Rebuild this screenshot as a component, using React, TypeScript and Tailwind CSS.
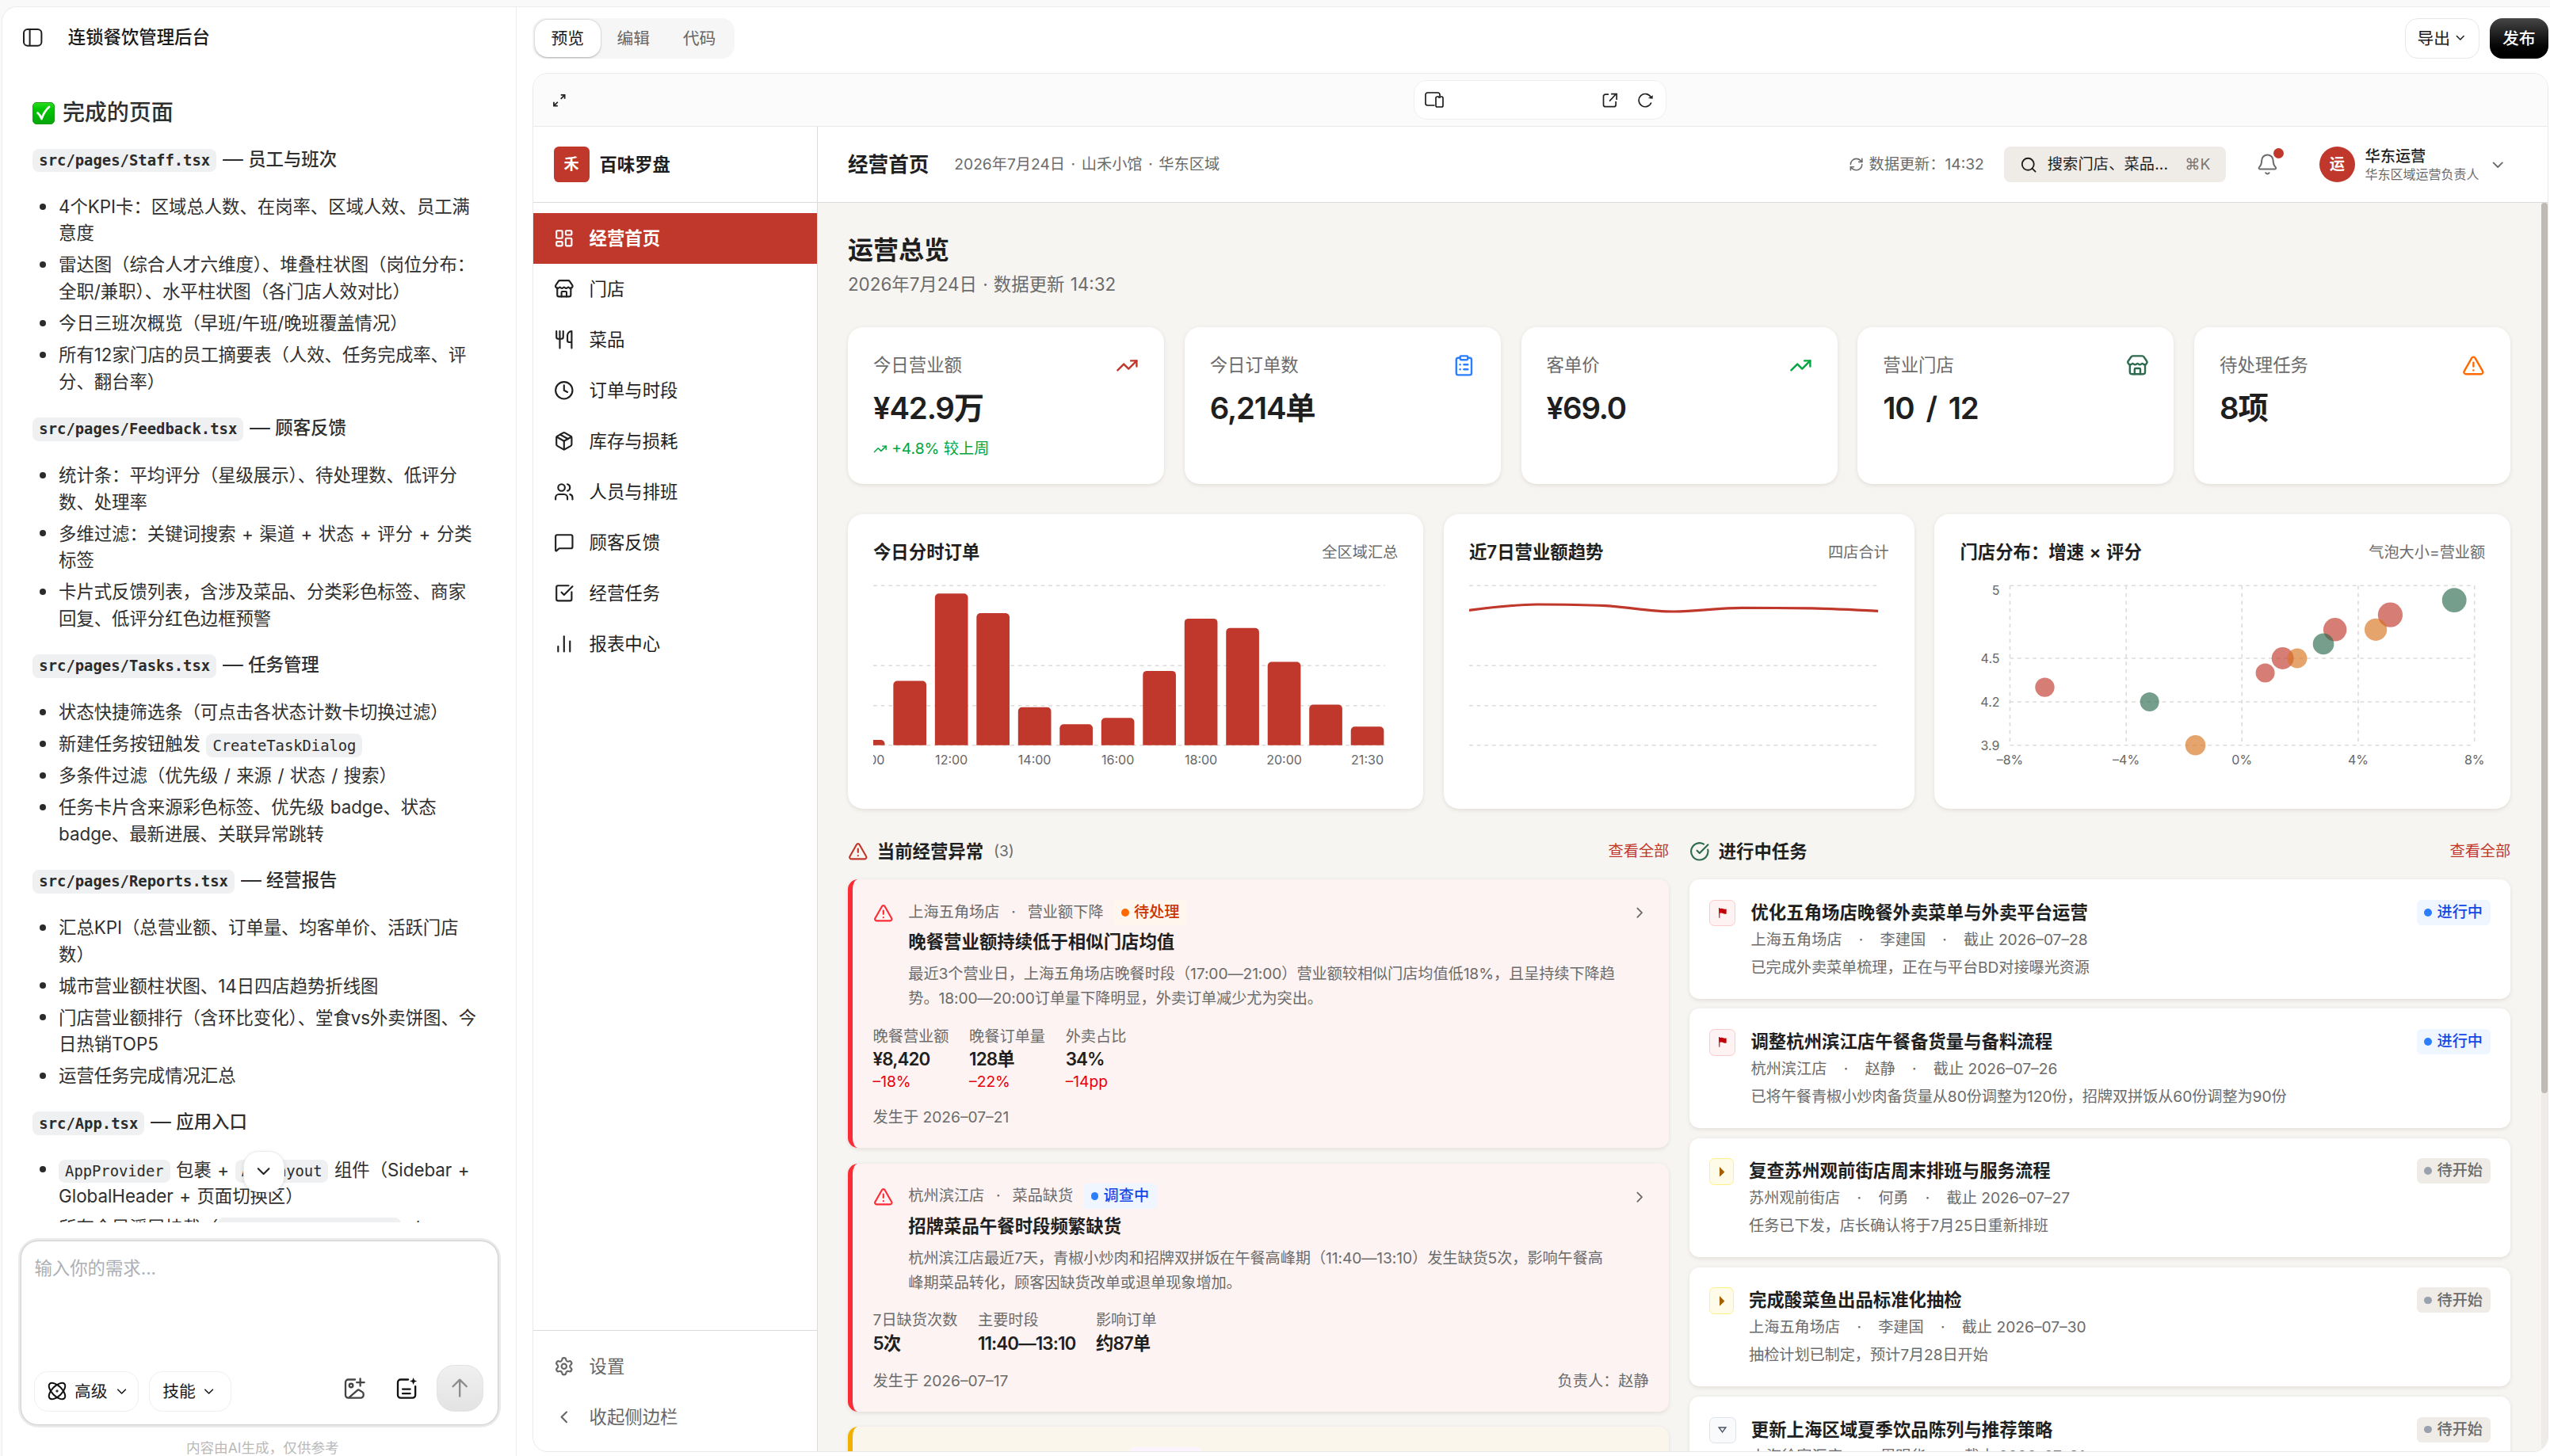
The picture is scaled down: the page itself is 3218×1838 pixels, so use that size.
import React from "react";
import {
  BarChart2,
  Bell,
  ChevronDown,
  ChevronLeft,
  ChevronRight,
  CircleCheckBig,
  ClipboardList,
  Clock,
  LayoutDashboard,
  MessageSquare,
  Package,
  RefreshCw,
  Search,
  Settings,
  SquareCheckBig,
  Store,
  TrendingUp,
  TriangleAlert,
  Users,
} from "lucide-react";

/* ---------------------------------------------------------------- chat */

function Code({ children, bold }: { children: React.ReactNode; bold?: boolean }) {
  return (
    <code
      className={
        "inline-flex h-[18.5px] items-center rounded-[5px] bg-[#eff0f2] px-[5px] align-middle font-['DejaVu_Sans_Mono',monospace] text-[11.8px] leading-[18px] text-[#2b2b2b] " +
        (bold ? "font-bold" : "font-normal")
      }
    >
      {children}
    </code>
  );
}

type Section = { file: string; title: string; items: React.ReactNode[][] };

const sections: Section[] = [
  {
    file: "src/pages/Staff.tsx",
    title: "员工与班次",
    items: [
      ["4个KPI卡：区域总人数、在岗率、区域人效、员工满", "意度"],
      ["雷达图（综合人才六维度）、堆叠柱状图（岗位分布：", "全职/兼职）、水平柱状图（各门店人效对比）"],
      ["今日三班次概览（早班/午班/晚班覆盖情况）"],
      ["所有12家门店的员工摘要表（人效、任务完成率、评", "分、翻台率）"],
    ],
  },
  {
    file: "src/pages/Feedback.tsx",
    title: "顾客反馈",
    items: [
      ["统计条：平均评分（星级展示）、待处理数、低评分", "数、处理率"],
      ["多维过滤：关键词搜索 + 渠道 + 状态 + 评分 + 分类", "标签"],
      ["卡片式反馈列表，含涉及菜品、分类彩色标签、商家", "回复、低评分红色边框预警"],
    ],
  },
  {
    file: "src/pages/Tasks.tsx",
    title: "任务管理",
    items: [
      ["状态快捷筛选条（可点击各状态计数卡切换过滤）"],
      [
        <>
          新建任务按钮触发 <Code>CreateTaskDialog</Code>
        </>,
      ],
      ["多条件过滤（优先级 / 来源 / 状态 / 搜索）"],
      ["任务卡片含来源彩色标签、优先级 badge、状态", "badge、最新进展、关联异常跳转"],
    ],
  },
  {
    file: "src/pages/Reports.tsx",
    title: "经营报告",
    items: [
      ["汇总KPI（总营业额、订单量、均客单价、活跃门店", "数）"],
      ["城市营业额柱状图、14日四店趋势折线图"],
      ["门店营业额排行（含环比变化）、堂食vs外卖饼图、今", "日热销TOP5"],
      ["运营任务完成情况汇总"],
    ],
  },
  {
    file: "src/App.tsx",
    title: "应用入口",
    items: [
      [
        <>
          <Code>AppProvider</Code> 包裹 + <Code>AppLayout</Code> 组件（Sidebar +
        </>,
        "GlobalHeader + 页面切换区）",
      ],
      [
        <>
          所有全局浮层挂载（<Code>GlobalSearchOverlay</Code> &nbsp;/
        </>,
      ],
    ],
  },
];

function ChatPanel() {
  return (
    <aside className="relative flex w-[405.5px] shrink-0 flex-col border-r border-[#ededed] text-[#2f2f2f]">
      <header className="flex h-[47.5px] shrink-0 items-center gap-[19.5px] pl-[15.5px]">
        <svg width="16.5" height="15.5" viewBox="0 0 33 31" fill="none" stroke="#1f1f1f" strokeWidth="2.5">
          <rect x="2.5" y="2.5" width="28" height="26" rx="6" />
          <path d="M12 2.5v26" />
        </svg>
        <h1 className="text-sm font-medium text-[#1a1a1a]">连锁餐饮管理后台</h1>
      </header>

      <div className="h-[911px] shrink-0 overflow-hidden whitespace-nowrap pl-[23.7px] text-sm leading-[21px] tracking-[-0.03px] [word-spacing:0.8px]">
        <h2 className="-mb-[2.7px] mt-[23px] flex h-[26px] items-center gap-[6px] text-[17.5px] font-medium">
          <svg width="17.5" height="17.5" viewBox="0 0 28 28">
            <defs>
              <linearGradient id="tick" x1="0" y1="0" x2="0" y2="1">
                <stop offset="0" stopColor="#2fdc1f" />
                <stop offset="0.3" stopColor="#02c703" />
                <stop offset="1" stopColor="#07a50b" />
              </linearGradient>
            </defs>
            <rect x="0.5" y="0.5" width="27" height="27" rx="4.5" fill="url(#tick)" stroke="#1a9c14" />
            <path d="M6.5 13.5c2.5 2 4 4.5 5 7.5 2-6 5-11 9.5-15" fill="none" stroke="#fff" strokeWidth="2.7" strokeLinecap="round" strokeLinejoin="round" />
          </svg>
          完成的页面
        </h2>
        {sections.map((s) => (
          <section key={s.file} className="pt-4">
            <h3 className="-mt-[0.6px] h-[21.6px] text-sm font-medium leading-[21px] tracking-normal [word-spacing:1px]">
              <Code bold>{s.file}</Code> <span className="inline-block origin-left scale-x-115 pr-[1.5px]">—</span> {s.title}
            </h3>
            <ul className="mt-4 space-y-1">
              {s.items.map((lines, i) => (
                <li key={i} className="relative pl-[20.5px]">
                  <span className="absolute left-[5.5px] top-[8px] size-[5px] rounded-full bg-[#2b2b2b]" />
                  {lines.map((l, j) => (
                    <div key={j} className="h-[21px]">
                      {l}
                    </div>
                  ))}
                </li>
              ))}
            </ul>
          </section>
        ))}
      </div>

      <button className="absolute left-[189.5px] top-[902.5px] flex h-[32.5px] w-[32.5px] items-center justify-center rounded-[12px] border border-[#ececec] bg-white shadow-[0_1px_3px_rgba(0,0,0,0.12)]">
        <ChevronDown size={17} strokeWidth={1.8} className="text-[#222]" />
      </button>

      <div className="ml-[12px] mt-[12.5px] flex h-[149.5px] w-[381px] shrink-0 rounded-[16px] bg-[#ebebeb] p-[2.5px]">
        <div className="flex flex-1 flex-col justify-between rounded-[13px] bg-white shadow-[0_0_1.5px_rgba(0,0,0,0.3)]">
          <p className="pl-[10.5px] pt-[11px] text-sm leading-[21px] text-[#acafb5]">输入你的需求...</p>
          <div className="flex items-end pb-[10px] pl-[10px] pr-[11.5px]">
            <button className="flex h-8 w-[83px] items-center rounded-[11px] border border-[#efefef] pl-[10.5px] text-[13px] text-[#1a1a1a]">
              <svg className="mr-[6px]" width="15" height="15" viewBox="0 0 24 24" fill="none" stroke="#111" strokeWidth="2">
                <ellipse cx="12" cy="12" rx="13" ry="6.3" transform="rotate(45 12 12)" />
                <ellipse cx="12" cy="12" rx="13" ry="6.3" transform="rotate(-45 12 12)" />
                <path d="M12 9.5l.7 1.8 1.8.7-1.8.7-.7 1.8-.7-1.8-1.8-.7 1.8-.7z" fill="#111" stroke="none" />
              </svg>
              高级
              <ChevronDown size={12} strokeWidth={2} className="ml-[5px]" />
            </button>
            <button className="ml-2 flex h-8 w-[65px] items-center rounded-[11px] border border-[#efefef] pl-[10px] text-[13px] text-[#1a1a1a]">
              技能
              <ChevronDown size={12} strokeWidth={2} className="ml-[4.5px]" />
            </button>
            <svg className="mb-[9.5px] ml-auto" width="17" height="17" viewBox="0 0 27 27" fill="none" stroke="#444" strokeWidth="2.3" strokeLinecap="round" strokeLinejoin="round">
              <path d="M14 2.5H5.5a3.5 3.5 0 0 0-3.5 3.5v16a3.5 3.5 0 0 0 3.5 3.5h15.5a3.5 3.5 0 0 0 3.5-3.5v-1.500q0-1.500-1.500-2.500l-3.500-2.200q-1.500-1-3 .4L6.500 25M20.500 1.500v9M16 6h9.5" />
              <circle cx="9" cy="10" r="2.3" />
            </svg>
            <svg className="mb-[9.5px] ml-[24.5px]" width="17" height="17" viewBox="0 0 27 27" fill="none" stroke="#111" strokeWidth="2.3" strokeLinecap="round" strokeLinejoin="round">
              <path d="M15 2.5H5.5a3.5 3.5 0 0 0-3.5 3.5v16a3.5 3.5 0 0 0 3.5 3.5h15a3.5 3.5 0 0 0 3.5-3.5V11M8 14.5h9.5M8 20h9.5" />
              <path d="M21.5 0l1.3 3.2 3.2 1.3-3.2 1.3-1.3 3.2-1.3-3.2-3.2-1.3 3.2-1.3z" fill="#111" stroke="none" />
            </svg>
            <button className="ml-[14.5px] flex h-[37px] w-[37px] items-center justify-center rounded-[14px] border border-[#e3e3e3] bg-linear-to-b from-[#f0f0f0] to-[#e3e3e3]">
              <svg width="14" height="16" viewBox="0 0 22 25" fill="none" stroke="#8c8c8c" strokeWidth="2.3" strokeLinecap="round" strokeLinejoin="round">
                <path d="M11 23V2.5M2.5 11L11 2.5l8.5 8.5" />
              </svg>
            </button>
          </div>
        </div>
      </div>
      <p className="mt-[8px] pl-[5px] text-center text-[11px] leading-[16px] text-[#b9b9b9]">内容由AI生成，仅供参考</p>
    </aside>
  );
}

/* ------------------------------------------------------------- toolbar */

function TopBar() {
  return (
    <div className="flex h-[52px] shrink-0 items-center justify-between">
      <div className="-mt-[2.5px] flex h-8 rounded-[10px] bg-[#f6f6f7] p-[1.5px] text-[13px] text-[#666]">
        <span className="flex w-[52px] items-center justify-center rounded-[10px] bg-white text-[#1a1a1a] shadow-[0_0.5px_1.5px_rgba(0,0,0,0.3)]">预览</span>
        <span className="flex w-[52px] items-center justify-center">编辑</span>
        <span className="flex w-[52px] items-center justify-center">代码</span>
      </div>
      <div className="-mt-[3px] flex gap-2">
        <button className="flex h-8 w-[59px] items-center justify-center gap-[2.5px] rounded-[10px] border border-[#e8e8e8] bg-white text-[13px] text-[#1a1a1a]">
          导出
          <ChevronDown size={11} strokeWidth={2} />
        </button>
        <button className="h-8 w-[46px] rounded-[10px] bg-linear-to-b from-[#474747] via-[#161616] to-black text-[13px] font-medium text-white">发布</button>
      </div>
    </div>
  );
}

function FrameBar() {
  return (
    <div className="relative flex h-[42px] shrink-0 items-center justify-center border-b border-[#e9e9e9] bg-[#fbfbfb]">
      <svg className="absolute left-[15px] top-[15.5px]" width="11" height="11" viewBox="0 0 18 18" fill="none" stroke="#222" strokeWidth="1.8">
        <path d="M11 7l4.5-4.5M7 11l-4.5 4.500" />
        <path d="M11 2h5v5M2 11v5h5" />
      </svg>
      <div className="flex h-[31.5px] w-[199.4px] items-center rounded-[10px] border border-[#efefef] bg-white pl-[8px] pr-[10px]">
        <svg width="15" height="12.5" viewBox="0 0 24 20" fill="none" stroke="#111" strokeWidth="1.6">
          <path d="M12.5 17H3.5a2.5 2.5 0 0 1-2.5-2.5v-11A2.5 2.5 0 0 1 3.5 1h13a2.5 2.5 0 0 1 2.5 2.5V5" />
          <rect x="14" y="6" width="9" height="13" rx="1.8" />
          <path d="M17 6.5h3v1.3h-3z" fill="#111" stroke="none" />
        </svg>
        <svg className="ml-auto" width="12" height="12" viewBox="0 0 19 19" fill="none" stroke="#222" strokeWidth="1.7">
          <path d="M8 2H4a2.5 2.5 0 0 0-2.5 2.5v10.5A2.5 2.5 0 0 0 4 17.5h10.5a2.5 2.5 0 0 0 2.5-2.5V11M9 10.5l7.5-8M11 1.7h7v7.3" />
        </svg>
        <svg className="ml-[15px]" width="13" height="12" viewBox="0 0 21 19" fill="none" stroke="#222" strokeWidth="1.7">
          <path d="M18 12.5A8.200 8.200 0 1 1 17.5 5.500" />
          <path d="M14 7l5.800.6L20 3z" fill="#222" stroke="none" />
        </svg>
      </div>
    </div>
  );
}

/* ------------------------------------------------------------- sidebar */

function CutleryIcon() {
  return (
    <svg width="16" height="16" viewBox="0 0 24 24" fill="none" stroke="currentColor" strokeWidth="2" strokeLinecap="round" strokeLinejoin="round">
      <path d="M3 2v7c0 1.1.9 2 2 2h4a2 2 0 0 0 2-2V2M7 2v20M21 15V2a5 5 0 0 0-5 5v6c0 1.1.9 2 2 2h3Zm0 0v7" />
    </svg>
  );
}

const nav = [
  { label: "门店", icon: <Store size={16} /> },
  { label: "菜品", icon: <CutleryIcon /> },
  { label: "订单与时段", icon: <Clock size={16} /> },
  { label: "库存与损耗", icon: <Package size={16} /> },
  { label: "人员与排班", icon: <Users size={16} /> },
  { label: "顾客反馈", icon: <MessageSquare size={16} /> },
  { label: "经营任务", icon: <SquareCheckBig size={16} /> },
  { label: "报表中心", icon: <BarChart2 size={16} /> },
];

function Sidebar() {
  return (
    <nav className="flex w-[224px] shrink-0 flex-col border-r border-[#dedcd9] bg-white text-sm text-[#1f1f1f]">
      <div className="flex h-[60px] shrink-0 items-center gap-2 border-b border-[#dedcd9] px-4">
        <span className="flex size-7 items-center justify-center rounded-[4px] bg-[#c0372b] text-xs font-bold text-white">禾</span>
        <span className="font-semibold">百味罗盘</span>
      </div>
      <div className="flex-1 pt-2">
        <div className="flex h-10 items-center gap-3 bg-[#c0372b] px-4 font-semibold text-white">
          <LayoutDashboard size={16} />
          经营首页
        </div>
        {nav.map((n) => (
          <div key={n.label} className="flex h-10 items-center gap-3 px-4">
            {n.icon}
            {n.label}
          </div>
        ))}
      </div>
      <div className="border-t border-[#dedcd9] pb-[7px] pt-[8px] text-[#666]">
        <div className="flex h-10 items-center gap-3 px-4">
          <Settings size={16} />
          设置
        </div>
        <div className="flex h-10 items-center gap-3 px-4">
          <ChevronLeft size={16} />
          收起侧边栏
        </div>
      </div>
    </nav>
  );
}

/* -------------------------------------------------------------- header */

function AppHeader() {
  return (
    <header className="flex h-[60px] shrink-0 items-center border-b border-[#dedcd9] bg-white pl-6 text-xs text-[#6b6b6b]">
      <h2 className="text-base font-semibold text-[#1f1f1f]">经营首页</h2>
      <span className="ml-5 [word-spacing:1.4px]">2026年7月24日 · 山禾小馆 · 华东区域</span>
      <span className="ml-auto flex items-center gap-1">
        <RefreshCw size={12} />
        数据更新：14:32
      </span>
      <div className="ml-4 flex h-7 w-[174.5px] items-center rounded-[5px] bg-[#efece8] pl-3 pr-3 text-[#1f1f1f]">
        <Search size={14} />
        <span className="ml-2 tracking-[0.1px]">搜索门店、菜品...</span>
        <span className="ml-auto text-[#777]">⌘K</span>
      </div>
      <span className="relative ml-[24px] flex size-[18px] items-center justify-center">
        <Bell size={18} strokeWidth={1.7} />
        <span className="absolute -top-[4px] right-[-4px] size-2 rounded-full bg-[#c0372b]" />
      </span>
      <span className="ml-[32px] flex size-7 items-center justify-center rounded-full bg-[#c0372b] font-semibold text-white">运</span>
      <div className="ml-2 flex flex-col">
        <span className="text-xs font-medium leading-[15px] text-[#1f1f1f]">华东运营</span>
        <span className="text-[10px] leading-[14px]">华东区域运营负责人</span>
      </div>
      <ChevronDown size={14} className="ml-2 mr-[31.8px]" />
    </header>
  );
}

/* ---------------------------------------------------------------- KPIs */

const kpis = [
  { label: "今日营业额", value: "¥42.9万", icon: <TrendingUp size={18} className="text-[#c0372b]" />, delta: "+4.8% 较上周" },
  { label: "今日订单数", value: "6,214单", icon: <ClipboardList size={18} className="text-[#2b7fff]" /> },
  { label: "客单价", value: "¥69.0", icon: <TrendingUp size={18} className="text-[#00a63e]" /> },
  { label: "营业门店", value: "10 / 12", icon: <Store size={18} className="text-[#2d6a4f]" /> },
  { label: "待处理任务", value: "8项", icon: <TriangleAlert size={18} className="text-[#ff6900]" /> },
];

const cardShadow = "shadow-[0_1px_3px_rgba(60,40,20,0.10)]";

function Kpis() {
  return (
    <div className="mt-6 grid grid-cols-5 gap-4">
      {kpis.map((k) => (
        <div key={k.label} className={"h-[123.7px] rounded-[12px] bg-white p-5 " + cardShadow}>
          <div className="flex h-5 items-center justify-between text-sm text-[#6b6b6b]">
            {k.label}
            {k.icon}
          </div>
          <div className="mt-2 text-2xl font-semibold leading-8 tracking-[-0.03em] text-[#1f1f1f] [word-spacing:4px]">{k.value}</div>
          {k.delta && (
            <div className="mt-2 flex items-center gap-[3.5px] text-xs text-[#00a63e]">
              <TrendingUp size={11} />
              {k.delta}
            </div>
          )}
        </div>
      ))}
    </div>
  );
}

/* -------------------------------------------------------------- charts */

const gridY = [6.2, 107.2, 157.7, 207.8];
const barTops = [201.1, 126.6, 16.3, 41.1, 159.8, 181.3, 173.3, 113.9, 47.9, 59.7, 102.6, 156.5, 184.2];
const barLabels: Record<number, string> = { 0: "10:00", 2: "12:00", 4: "14:00", 6: "16:00", 8: "18:00", 10: "20:00", 12: "21:30" };
const axisText = { fontSize: 16, fill: "#666" };

function barPath(x: number, y: number) {
  const w = 41.6;
  const r = 5;
  return `M${x} 207.8V${y + r}a${r} ${r} 0 0 1 ${r} ${-r}h${w - 2 * r}a${r} ${r} 0 0 1 ${r} ${r}V207.8z`;
}

function OrdersChart() {
  return (
    <svg className="block h-40 w-full" viewBox="0 0 661.2 256" preserveAspectRatio="none">
      {gridY.map((y) => (
        <path key={y} d={`M0 ${y}H644.7`} stroke="#dddbd8" strokeWidth="1.6" strokeDasharray="4.8 4.8" />
      ))}
      {barTops.map((y, i) => (
        <path key={i} d={barPath(-27.1 + 52.4 * i, y)} fill="#c0372b" />
      ))}
      {barTops.map((_, i) =>
        barLabels[i] ? (
          <text key={i} x={-6.3 + 52.4 * i} y="232.5" textAnchor="middle" {...axisText}>
            {barLabels[i]}
          </text>
        ) : null,
      )}
    </svg>
  );
}

function TrendChart() {
  return (
    <svg className="block h-40 w-full" viewBox="0 0 529.2 256" preserveAspectRatio="none">
      {gridY.map((y) => (
        <path key={y} d={`M0 ${y}H515.4`} stroke="#dddbd8" strokeWidth="1.6" strokeDasharray="4.8 4.8" />
      ))}
      <path
        d="M0 37.4C28.6 33.8 57.3 30 85.9 30C114.5 30 143.2 30.3 171.8 31.6C200.4 33.3 229.1 39 257.7 39C286.3 39 315 34.4 343.6 34.4C372.2 34.4 400.9 34.5 429.5 34.8C458.1 35.3 486.8 36.8 515.4 38.3"
        fill="none"
        stroke="#c0372b"
        strokeWidth="3.2"
      />
    </svg>
  );
}

const RED = "#c0372b";
const GREEN = "#2d6a4f";
const ORANGE = "#d9731f";
const bubbles: [number, number, number, string][] = [
  [473.3, 61.8, 14.7, RED],
  [543, 43.2, 15.6, RED],
  [407.3, 98, 13.9, RED],
  [385.3, 116.5, 12, RED],
  [107.4, 134.6, 12.2, RED],
  [623.7, 24.7, 15.4, GREEN],
  [458.7, 79.9, 13.3, GREEN],
  [239.5, 153.1, 12, GREEN],
  [524.7, 61.8, 14.1, ORANGE],
  [425.7, 98, 12.4, ORANGE],
  [297.3, 207.8, 12.8, ORANGE],
];

function BubbleChart() {
  return (
    <svg className="block h-40 w-full" viewBox="0 0 662.3 256" preserveAspectRatio="none">
      {[6.2, 98, 153, 207.8].map((y) => (
        <path key={y} d={`M63.4 ${y}H649.2`} stroke="#dddbd8" strokeWidth="1.6" strokeDasharray="4.8 4.8" />
      ))}
      {[63.4, 210, 356, 502.6, 649.2].map((x) => (
        <path key={x} d={`M${x} 6.2V207.8`} stroke="#dddbd8" strokeWidth="1.6" strokeDasharray="4.8 4.8" />
      ))}
      {[["5", 12.5], ["4.5", 98.4], ["4.2", 153], ["3.9", 208]].map(([t, y]) => (
        <text key={t} x="50.5" y={Number(y) + 5.8} textAnchor="end" {...axisText}>
          {t}
        </text>
      ))}
      {[["–8%", 63.4], ["–4%", 210], ["0%", 356], ["4%", 502.6], ["8%", 649.2]].map(([t, x]) => (
        <text key={t} x={x} y="232.5" textAnchor="middle" {...axisText}>
          {t}
        </text>
      ))}
      {bubbles.map(([x, y, r, c], i) => (
        <circle key={i} cx={x} cy={y} r={r} fill={c} fillOpacity="0.65" />
      ))}
    </svg>
  );
}

function ChartCard({ title, note, children }: { title: string; note: string; children: React.ReactNode }) {
  return (
    <div className={"h-[232px] rounded-[12px] bg-white p-5 " + cardShadow}>
      <div className="mb-3 flex h-5 items-center justify-between">
        <h3 className="text-sm font-semibold text-[#1f1f1f] [word-spacing:0.5px]">{title}</h3>
        <span className="text-xs text-[#6b6b6b]">{note}</span>
      </div>
      {children}
    </div>
  );
}

/* -------------------------------------------------------------- badges */

const tones = {
  orange: { box: "bg-[#fff7ed] text-[#ca3500]", dot: "bg-[#ff6900]" },
  blue: { box: "bg-[#eff6ff] text-[#1447e6]", dot: "bg-[#2b7fff]" },
  purple: { box: "bg-[#faf5ff] text-[#8200db]", dot: "bg-[#ad46ff]" },
  gray: { box: "bg-[#efece8] text-[#6b6b6b]", dot: "bg-[#99a1af]" },
};

function Badge({ tone, children }: { tone: keyof typeof tones; children: React.ReactNode }) {
  return (
    <span className={"flex h-5 shrink-0 items-center gap-1 rounded-[4px] px-1.5 text-xs font-medium " + tones[tone].box}>
      <span className={"size-1.5 rounded-full " + tones[tone].dot} />
      {children}
    </span>
  );
}

/* ----------------------------------------------------------- anomalies */

type Anomaly = {
  store: string;
  kind: string;
  badge: string;
  tone: keyof typeof tones;
  title: string;
  lines: string[];
  metrics: string[][];
  date: string;
  owner?: string;
  warn?: boolean;
};

const anomalies: Anomaly[] = [
  {
    store: "上海五角场店",
    kind: "营业额下降",
    badge: "待处理",
    tone: "orange",
    title: "晚餐营业额持续低于相似门店均值",
    lines: ["最近3个营业日，上海五角场店晚餐时段（17:00—21:00）营业额较相似门店均值低18%，且呈持续下降趋", "势。18:00—20:00订单量下降明显，外卖订单减少尤为突出。"],
    metrics: [
      ["晚餐营业额", "¥8,420", "–18%"],
      ["晚餐订单量", "128单", "–22%"],
      ["外卖占比", "34%", "–14pp"],
    ],
    date: "2026–07–21",
  },
  {
    store: "杭州滨江店",
    kind: "菜品缺货",
    badge: "调查中",
    tone: "blue",
    title: "招牌菜品午餐时段频繁缺货",
    lines: ["杭州滨江店最近7天，青椒小炒肉和招牌双拼饭在午餐高峰期（11:40—13:10）发生缺货5次，影响午餐高", "峰期菜品转化，顾客因缺货改单或退单现象增加。"],
    metrics: [
      ["7日缺货次数", "5次"],
      ["主要时段", "11:40—13:10"],
      ["影响订单", "约87单"],
    ],
    date: "2026–07–17",
    owner: "赵静",
  },
  {
    store: "苏州观前街店",
    kind: "顾客评分下降",
    badge: "整改中",
    tone: "purple",
    title: "周末服务评分连续下降",
    lines: [],
    metrics: [],
    date: "2026–07–18",
    warn: true,
  },
];

function AnomalyCard({ a }: { a: Anomaly }) {
  return (
    <div
      className={
        "shrink-0 rounded-[8px] border-l-4 p-4 text-xs text-[#6b6b6b] " +
        cardShadow +
        (a.warn ? " border-[#f0b100] bg-[#fbf6ec]" : " border-[#fb2c36] bg-[#fdf3f2]")
      }
    >
      <div className="flex gap-3">
        <TriangleAlert size={16} className={"mt-[2.5px] shrink-0 " + (a.warn ? "text-[#f0b100]" : "text-[#fb2c36]")} />
        <div className="min-w-0 flex-1">
          <div className="flex h-5 items-center gap-2">
            {a.store}
            <span className="w-[6px] text-center">·</span>
            {a.kind}
            <Badge tone={a.tone}>{a.badge}</Badge>
          </div>
          <h4 className="mt-[3.5px] text-sm font-semibold leading-5 text-[#1f1f1f]">{a.title}</h4>
          <div className="mt-[5.5px] whitespace-nowrap leading-[19.5px] tracking-[-0.05px]">
            {a.lines.map((l) => (
              <div key={l}>{l}</div>
            ))}
          </div>
        </div>
        <ChevronRight size={14} className="mt-[3.5px] shrink-0" />
      </div>
      <div className="mt-3 flex gap-4">
        {a.metrics.map(([label, value, delta]) => (
          <div key={label}>
            <div className="leading-4">{label}</div>
            <div className="text-sm font-semibold leading-5 tracking-[-0.04em] text-[#1f1f1f]">{value}</div>
            {delta && <div className="leading-4 text-[#e7000b]">{delta}</div>}
          </div>
        ))}
      </div>
      <div className="mt-3 flex justify-between leading-4">
        <span>发生于 {a.date}</span>
        {a.owner && <span>负责人：{a.owner}</span>}
      </div>
    </div>
  );
}

/* --------------------------------------------------------------- tasks */

type Priority = "high" | "mid" | "low";

function PriorityMark({ level }: { level: Priority }) {
  if (level === "high")
    return (
      <span className="flex h-[21px] w-[20.5px] shrink-0 items-center justify-center rounded-[4px] border border-[#ffc9c9] bg-[#fef2f2]">
        <svg width="6.25" height="8.2" viewBox="0 0 30 39">
          <path d="M0 0h3l1 3q6-2.500 11 0t14 1.500v17.500q-8 2-13-1t-12-1V38H1z" fill="#c10007" />
        </svg>
      </span>
    );
  if (level === "mid")
    return (
      <span className="flex h-[21px] w-[19px] shrink-0 items-center justify-center rounded-[4px] border border-[#fff085] bg-[#fefce8]">
        <svg className="ml-px" width="4" height="8" viewBox="0 0 6 12">
          <path d="M0 0l6 6-6 6z" fill="#a65f00" />
        </svg>
      </span>
    );
  return (
    <span className="flex h-[21px] w-[20.7px] shrink-0 items-center justify-center rounded-[4px] border border-[#dfe3e8] bg-[#f8fafc]">
      <svg width="7" height="5" viewBox="0 0 11 8" fill="none" stroke="#4a5565" strokeWidth="1.4">
        <path d="M1.2 1h8.6L5.5 6.8z" />
      </svg>
    </span>
  );
}

const tasks: { level: Priority; title: string; store: string; owner: string; due: string; note: string; active?: boolean }[] = [
  { level: "high", title: "优化五角场店晚餐外卖菜单与外卖平台运营", store: "上海五角场店", owner: "李建国", due: "2026–07–28", note: "已完成外卖菜单梳理，正在与平台BD对接曝光资源", active: true },
  { level: "high", title: "调整杭州滨江店午餐备货量与备料流程", store: "杭州滨江店", owner: "赵静", due: "2026–07–26", note: "已将午餐青椒小炒肉备货量从80份调整为120份，招牌双拼饭从60份调整为90份", active: true },
  { level: "mid", title: "复查苏州观前街店周末排班与服务流程", store: "苏州观前街店", owner: "何勇", due: "2026–07–27", note: "任务已下发，店长确认将于7月25日重新排班" },
  { level: "mid", title: "完成酸菜鱼出品标准化抽检", store: "上海五角场店", owner: "李建国", due: "2026–07–30", note: "抽检计划已制定，预计7月28日开始" },
  { level: "low", title: "更新上海区域夏季饮品陈列与推荐策略", store: "上海徐家汇店", owner: "周明华", due: "2026–07–31", note: "陈列方案准备中" },
];

function TaskCard({ t }: { t: (typeof tasks)[number] }) {
  return (
    <div className={"flex h-[94px] shrink-0 gap-3 rounded-[8px] bg-white p-4 text-xs text-[#6b6b6b] " + cardShadow}>
      <PriorityMark level={t.level} />
      <div className="flex-1">
        <h4 className="text-sm font-semibold leading-5 text-[#1f1f1f]">{t.title}</h4>
        <div className="mt-[3.7px] flex gap-3 leading-4">
          {t.store}
          <span className="w-[6px] text-center">·</span>
          {t.owner}
          <span className="w-[6px] text-center">·</span>
          <span>截止 {t.due}</span>
        </div>
        <div className="mt-[6px] leading-4 tracking-[-0.05px]">{t.note}</div>
      </div>
      <Badge tone={t.active ? "blue" : "gray"}>{t.active ? "进行中" : "待开始"}</Badge>
    </div>
  );
}

/* ----------------------------------------------------------- dashboard */

function ListHeader({ icon, title, count }: { icon: React.ReactNode; title: string; count?: string }) {
  return (
    <div className="mb-3 flex h-5 items-center">
      {icon}
      <h3 className="ml-[7px] text-sm font-semibold text-[#1f1f1f]">{title}</h3>
      {count && <span className="ml-2 text-xs text-[#6b6b6b]">{count}</span>}
      <a className="ml-auto text-xs text-[#c0372b]">查看全部</a>
    </div>
  );
}

function Dashboard() {
  return (
    <main className="flex min-h-0 flex-1 bg-[#f7f5f2]">
      <div className="flex-1 overflow-hidden pl-6 pr-6 pt-6">
        <h2 className="text-xl font-bold leading-[26px] text-[#1f1f1f]">运营总览</h2>
        <p className="mt-[4px] text-sm leading-5 text-[#6b6b6b] [word-spacing:0.6px]">2026年7月24日 · 数据更新 14:32</p>
        <Kpis />
        <div className="mt-6 grid grid-cols-[453.7fr_371fr_454fr] gap-4">
          <ChartCard title="今日分时订单" note="全区域汇总">
            <OrdersChart />
          </ChartCard>
          <ChartCard title="近7日营业额趋势" note="四店合计">
            <TrendChart />
          </ChartCard>
          <ChartCard title="门店分布：增速 × 评分" note="气泡大小=营业额">
            <BubbleChart />
          </ChartCard>
        </div>
        <div className="mt-6 grid grid-cols-2 gap-4">
          <div>
            <ListHeader icon={<TriangleAlert size={16} className="text-[#c0372b]" />} title="当前经营异常" count="(3)" />
            <div className="flex flex-col gap-3">
              {anomalies.map((a) => (
                <AnomalyCard key={a.title} a={a} />
              ))}
            </div>
          </div>
          <div>
            <ListHeader icon={<CircleCheckBig size={16} className="text-[#2d6a4f]" />} title="进行中任务" />
            <div className="flex flex-col gap-2">
              {tasks.map((t) => (
                <TaskCard key={t.title} t={t} />
              ))}
            </div>
          </div>
        </div>
      </div>
      <div className="w-[5px] shrink-0 bg-[#eeebe8]">
        <div className="h-[702px] rounded-full bg-[#bfbab4]" />
      </div>
    </main>
  );
}

export default function App() {
  return (
    <div className="h-[1148.75px] w-[2011.25px] overflow-hidden bg-[#f9f9f9] pl-[1.5px] pt-[5px] font-['Inter','Noto_Sans_CJK_SC',sans-serif] [zoom:1.6]">
      <div className="flex h-[1145px] rounded-tl-[12px] border-l border-t border-[#ececec] bg-white">
        <ChatPanel />
        <div className="flex min-w-0 flex-1 flex-col pl-[12.5px] pr-[1.5px]">
          <TopBar />
          <div className="flex h-[1088px] flex-col overflow-hidden rounded-[12px] border border-[#e9e9e9]">
            <FrameBar />
            <div className="flex min-h-0 flex-1">
              <Sidebar />
              <div className="flex min-w-0 flex-1 flex-col">
                <AppHeader />
                <Dashboard />
              </div>
            </div>
          </div>
        </div>
      </div>
    </div>
  );
}
